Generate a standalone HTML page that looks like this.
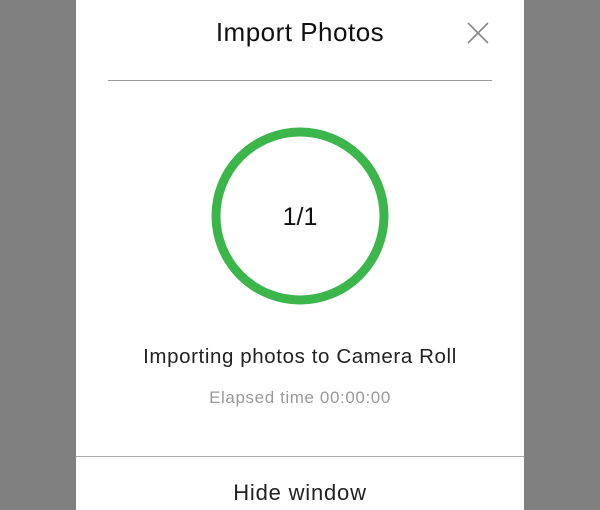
<!DOCTYPE html>
<html><head><style>
html,body{margin:0;padding:0;}
body{width:600px;height:510px;background:#808080;position:relative;overflow:hidden;font-family:"Liberation Sans",sans-serif;}
.p{position:absolute;left:76px;top:0;width:448px;height:510px;background:#fff;}
.t{position:absolute;left:0;width:448px;text-align:center;white-space:nowrap;}
</style></head><body>
<div class="p">
<div class="t" style="top:17px;font-size:26px;color:#111;letter-spacing:0.5px;">Import Photos</div>
<svg style="position:absolute;left:390px;top:21px" width="24" height="24"><path d="M2 2L22 22M22 2L2 22" stroke="#888" stroke-width="1.6" fill="none"/></svg>
<div style="position:absolute;left:32px;top:80px;width:384px;height:1px;background:#999"></div>
<svg style="position:absolute;left:134px;top:126px" width="180" height="180"><circle cx="90" cy="90" r="84" stroke="#3cb54a" stroke-width="9" fill="none"/></svg>
<div class="t" style="top:203px;font-size:25px;color:#111;">1/1</div>
<div class="t" style="top:345px;font-size:20.5px;color:#222;letter-spacing:0.6px;">Importing photos to Camera Roll</div>
<div class="t" style="top:388px;font-size:17px;color:#999;letter-spacing:0.6px;">Elapsed time 00:00:00</div>
<div style="position:absolute;left:0;top:456px;width:448px;height:1px;background:#aaa"></div>
<div class="t" style="top:480px;font-size:22px;color:#222;letter-spacing:0.8px;">Hide window</div>
</div>
</body></html>
